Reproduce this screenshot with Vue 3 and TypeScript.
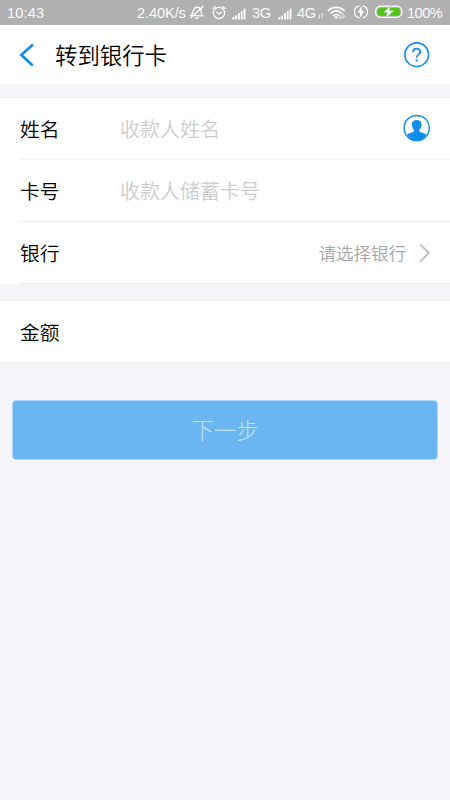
<script setup lang="ts">
import { ref } from 'vue'

interface Field {
  key: string
  label: string
  placeholder: string
}

const fields: Field[] = [
  { key: 'name', label: '姓名', placeholder: '收款人姓名' },
  { key: 'card', label: '卡号', placeholder: '收款人储蓄卡号' },
]

const values = ref<Record<string, string>>({ name: '', card: '' })
const amount = ref('')
</script>

<template>
  <main class="screen">
    <div class="status">
      <span class="clock">10:43</span>
      <span class="speed">2.40K/s</span>
      <svg class="mute" width="16" height="16" viewBox="0 0 16 16" fill="none" stroke="#fff" stroke-width="1.3">
        <path d="M2 10.5C4.5 8.5 3.5 4.5 6 3C8 1.6 11.5 2.2 12 4.8C12.8 7.5 11.3 8.5 13.5 10.8ZM6 13h3.8M14.5 1L1.5 13" />
      </svg>
      <svg class="alarm" width="14" height="16" viewBox="0 0 14 16" fill="none" stroke="#fff" stroke-width="1.2">
        <circle cx="7" cy="8" r="5.6" />
        <path d="M.5 3.8L3.8 1.2M13.5 3.8L10.2 1.2M4.2 6.8L7 9L10 6.8" />
      </svg>
      <svg class="signal first" width="14" height="12" viewBox="0 0 14 12" fill="#fff">
        <path d="M.5 9h1.8v2.5H.5zM3.2 7.5H5v4H3.2zM6 5.3h1.8v6.2H6zM8.8 3h1.8v8.5H8.8zM11.6.7h1.8v10.8h-1.8z" />
      </svg>
      <span class="net">3G</span>
      <svg class="signal second" width="14" height="12" viewBox="0 0 14 12" fill="#fff">
        <path d="M.5 9h1.8v2.5H.5zM3.2 7.5H5v4H3.2zM6 5.3h1.8v6.2H6zM8.8 3h1.8v8.5H8.8zM11.6.7h1.8v10.8h-1.8z" />
      </svg>
      <span class="net">4G</span>
      <svg class="data" width="6" height="8" viewBox="0 0 6 8" fill="none" stroke="#f4f4f4" stroke-width=".8">
        <path d="M1.5 2v4.5L.5 5.3M4 6.5V1.5L5.2 2.8" />
      </svg>
      <svg class="wifi" width="20" height="14" viewBox="0 0 20 14" fill="none" stroke="#fff" stroke-width="1.6">
        <path d="M.8 5C5.5.1 13 .1 17.7 5M3.5 7.6C7 4 11.5 4 15 7.6M6 10.1C8 8 10.5 8 12.5 10.1" />
        <path d="M7.2 11L9.2 13.2L11.2 11Q9.2 9.5 7.2 11Z" fill="#fff" stroke="none" />
        <path d="M12 12.8L16.8 8M14.8 12.8L18 9.6" stroke-width="1" />
      </svg>
      <svg class="charge" width="14" height="14" viewBox="0 0 14 14">
        <path d="M5.2.9A6.1 6.1 0 0 0 5.2 12.8M8.8.9A6.1 6.1 0 0 1 8.8 12.8" fill="none" stroke="#fff" stroke-width="1.2" />
        <path d="M7.8.8L3.8 7.6H6.3L5.7 13.2L10.1 6H7.5Z" fill="#fff" />
      </svg>
      <svg class="battery" width="28" height="14" viewBox="0 0 28 14">
        <rect x=".7" y="1.2" width="26.1" height="11.2" rx="5" fill="none" stroke="#fff" stroke-width="1.2" />
        <rect x="2.5" y="2.9" width="22.5" height="7.8" rx="3" fill="#4fc613" />
        <path d="M15.4.8L8.5 7.6H12.3L11 12.8L19 5.7H14.6Z" fill="#fff" stroke="#b0b0b0" stroke-width=".5" />
      </svg>
      <span class="percent">100%</span>
    </div>

    <header class="header">
      <svg class="back" width="16" height="24" viewBox="0 0 16 24" fill="none" stroke="#108ee9" stroke-width="2.7">
        <path d="M15 1.5L3.3 12L14.8 22.5" />
      </svg>
      <h1>转到银行卡</h1>
      <svg class="help" width="26" height="26" viewBox="0 0 26 26" fill="none" stroke="#108ee9">
        <circle cx="12.7" cy="12.7" r="11.8" stroke-width="1.6" />
        <path d="M9.1 10.1C9.1 5.6 16.3 5.6 16.3 9.9C16.3 12.4 12.7 12.4 12.7 15.7" stroke-width="1.8" />
        <circle cx="12.7" cy="18.5" r="1.15" fill="#108ee9" stroke="none" />
      </svg>
    </header>

    <section class="card details">
      <label v-for="field in fields" :key="field.key" class="row">
        <span class="label">{{ field.label }}</span>
        <input v-model="values[field.key]" type="text" :placeholder="field.placeholder">
        <svg v-if="field.key === 'name'" width="28" height="28" viewBox="0 0 28 28">
          <circle cx="14.7" cy="14" r="12.6" fill="none" stroke="#108ee9" stroke-width="1.5" />
          <path d="M10 9.5C10 4.8 19.4 4.8 19.4 9.5C19.6 13 18.7 14.5 17.4 15.7V17.4C19 18.6 22.2 18.7 24.4 20.7Q20.7 26.7 14.7 26.7T5 20.7C7.2 18.7 10.4 18.6 12 17.4V15.7C10.7 14.5 9.8 13 10 9.5Z" fill="#108ee9" />
        </svg>
      </label>
      <div class="row bank">
        <span class="label">银行</span>
        <span class="choice">请选择银行</span>
        <svg width="12" height="20" viewBox="0 0 12 20" fill="none" stroke="#c2c2c2" stroke-width="2">
          <path d="M1.2 1.5L9.9 10L1.2 18.5" />
        </svg>
      </div>
    </section>

    <section class="card amount">
      <label class="row">
        <span class="label">金额</span>
        <input v-model="amount" type="text">
      </label>
    </section>

    <button class="next" type="button" disabled>下一步</button>
  </main>
</template>

<style>
body {
  margin: 0;
  background: #f4f4f9;
}
</style>

<style scoped>
.screen {
  box-sizing: border-box;
  width: 450px;
  height: 800px;
  overflow: hidden;
  background: #f4f4f9;
  color: #000;
  font-family: "Noto Sans CJK SC", sans-serif;
  font-weight: 350;
}

.status {
  display: flex;
  align-items: center;
  box-sizing: border-box;
  height: 25px;
  padding-left: 7px;
  background: #b0b0b0;
  color: #fafafa;
  font: 14.6px/25px "Liberation Sans", Arial, sans-serif;
  white-space: nowrap;
}

.status svg,
.status span {
  flex: none;
}

.status span {
  padding-top: 1px;
}

.clock { width: 130px; letter-spacing: .15px; }
.speed { width: 53px; letter-spacing: -.1px; }
.mute { margin-left: -1px; }
.alarm { margin-left: 7px; }
.signal.first { margin: 2px 6px 0 6px; }
.net { width: 20px; letter-spacing: -.3px; }
.signal.second { margin: 2px 5px 0 6px; }
.data { margin: 6px 0 0 1px; }
.wifi { margin-left: 3px; }
.charge { margin: 0 0 1px 7px; }
.battery { margin: 0 4px 1px 7px; }
.percent { letter-spacing: -.55px; }

.header {
  display: flex;
  align-items: center;
  box-sizing: border-box;
  height: 59px;
  padding: 0 20px 0 18px;
  background: #fff;
}

h1 {
  flex: 1;
  margin: -2px 0 0 21px;
  font-size: 22.4px;
  font-weight: 350;
  line-height: 32px;
}

.card {
  background: #fff;
}

.details {
  margin-top: 13px;
  padding: 1px 0 0 20px;
  box-shadow: inset 0 1px #ebebed;
}

.row {
  display: flex;
  align-items: center;
  box-sizing: border-box;
  height: 62px;
  padding-right: 19px;
  border-bottom: 1px solid #ebebed;
}

.row:first-child {
  height: 62px;
  padding-right: 20px;
  padding-bottom: 1px;
  border-bottom: 1px solid #f0f0f2;
}

.label {
  width: 100px;
  padding-top: 1px;
  font-size: 19.8px;
  line-height: 28px;
}

input {
  flex: 1;
  min-width: 0;
  padding: 1px 0 0;
  border: 0;
  outline: 0;
  background: transparent;
  color: #000;
  font: 350 20px/28px "Noto Sans CJK SC", sans-serif;
}

input::placeholder {
  color: #ccc;
  opacity: 1;
}

.bank {
  height: 62px;
}

.choice {
  margin-left: auto;
  margin-right: 13px;
  color: #a5a5a5;
  font-size: 17.5px;
}

.details .row svg {
  flex: none;
}

.bank svg {
  margin-top: 1px;
}

.amount {
  margin-top: 16px;
  padding-left: 20px;
  border-top: 1px solid #f0f0f3;
  border-bottom: 1px solid #ebebed;
}

.amount .row {
  height: 61px;
  padding-bottom: 1px;
  border: 0;
}

.next {
  display: block;
  box-sizing: border-box;
  width: 426px;
  height: 60px;
  margin: 37px 12px 0;
  padding: 0 0 2px;
  border: 1px solid #b0d7f5;
  border-radius: 4px;
  background: #6bb6f0;
  color: #c4e1f9;
  font: 300 22.4px/56px "Noto Sans CJK SC", sans-serif;
}
</style>
